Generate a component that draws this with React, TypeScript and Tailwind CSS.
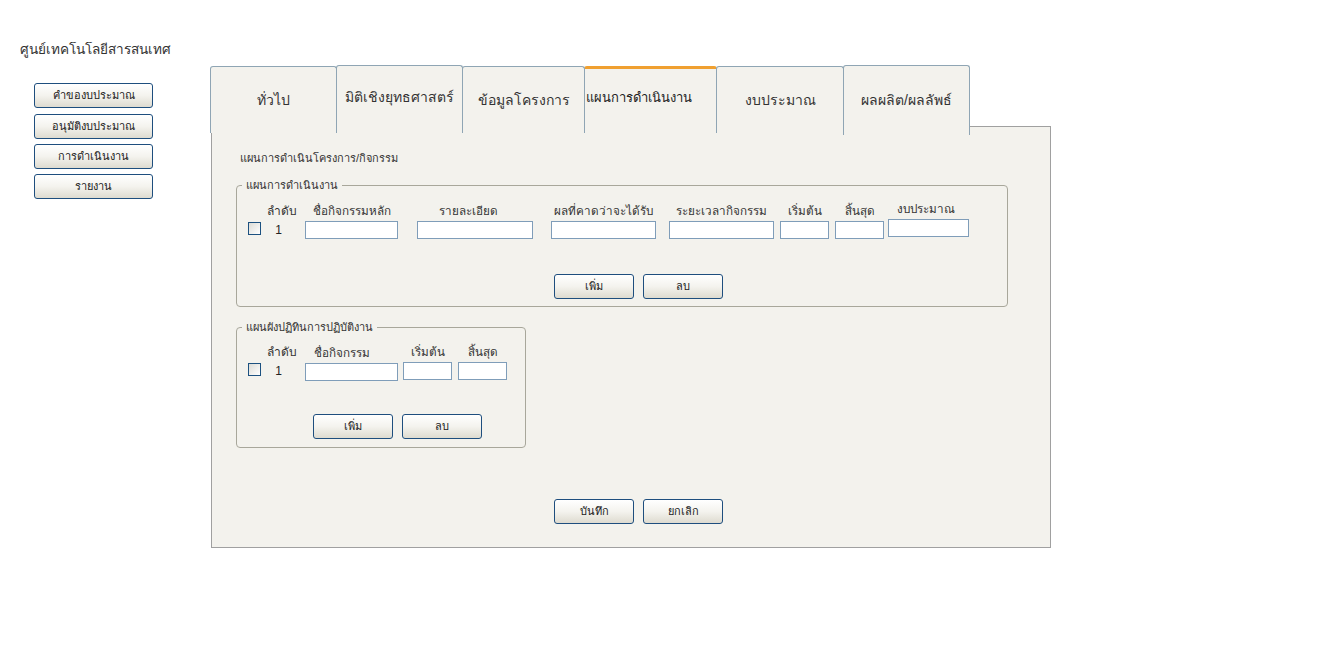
const FONT = "font-['Tahoma','Liberation_Sans','Noto_Sans',sans-serif]";

const SIDE_LINKS = [
  { label: "คำของบประมาณ", cls: "" },
  { label: "อนุมัติงบประมาณ", cls: "mt-[6px]" },
  { label: "การดำเนินงาน", cls: "mt-[5px]" },
  { label: "รายงาน", cls: "mt-[5px]" },
];

const TABS = [
  { label: "ทั่วไป", cls: "w-[127px] pt-[24px] text-center text-[14px]" },
  { label: "มิติเชิงยุทธศาสตร์", cls: "w-[127px] -ml-px pt-[22px] mt-[-1px] h-[68px] text-center text-[14px]" },
  { label: "ข้อมูลโครงการ", cls: "w-[123px] -ml-px pt-[24px] text-center text-[14px]" },
  { label: "แผนการดำเนินงาน", cls: "w-[133px] -ml-px pt-[20px] pr-[24px] text-center text-[13px] border-t-[3px] border-t-[#f0a030]", active: true },
  { label: "งบประมาณ", cls: "w-[128px] -ml-px pt-[24px] text-center text-[14px]" },
  { label: "ผลผลิต/ผลลัพธ์", cls: "w-[127px] -ml-px pt-[25px] mt-[-1px] h-[70px] text-center text-[14px]" },
];

// plan columns: header + input
const PLAN_COLS = [
  { head: "ชื่อกิจกรรมหลัก", cls: "w-[93px] ml-[8px]" },
  { head: "รายละเอียด", cls: "w-[116px] ml-[19px]", headCls: "pr-[14px]" },
  { head: "ผลที่คาดว่าจะได้รับ", cls: "w-[105px] ml-[18px]" },
  { head: "ระยะเวลากิจกรรม", cls: "w-[105px] ml-[13px]" },
  { head: "เริ่มต้น", cls: "w-[49px] ml-[6px]" },
  { head: "สิ้นสุด", cls: "w-[49px] ml-[6px]" },
  { head: "งบประมาณ", cls: "w-[81px] ml-[4px]", headCls: "-mt-[2px] pr-[5px]", inputCls: "-mt-px" },
];

const CAL_COLS = [
  { head: "ชื่อกิจกรรม", cls: "w-[93px] ml-[8px]", headCls: "self-start pl-[9px] mt-[1px]" },
  { head: "เริ่มต้น", cls: "w-[49px] ml-[5px]" },
  { head: "สิ้นสุด", cls: "w-[49px] ml-[6px]" },
];

function XpButton({ label, className = "" }: { label: string; className?: string }) {
  return (
    <button
      className={`h-[25px] w-[80px] rounded-[3px] border border-[#1e4e7e] bg-gradient-to-b from-[#ffffff] via-[#f4f3ee] to-[#dedbd0] text-[11px] text-[#222] ${className}`}
    >
      {label}
    </button>
  );
}

function Checkbox() {
  return <span className="block h-[13px] w-[13px] border border-[#1c5180] bg-gradient-to-br from-[#dcdcd6] to-[#ffffff]" />;
}

function TextBox({ className = "" }: { className?: string }) {
  return <div className={`h-[18px] w-full border border-[#7f9db9] bg-white ${className}`} />;
}

interface Col {
  head: string;
  cls: string;
  headCls?: string;
  inputCls?: string;
}

function GridRow({ cols }: { cols: Col[] }) {
  return (
    <div className="flex">
      {/* checkbox */}
      <div className="ml-[11px] flex flex-col">
        <div className="h-[16px]" />
        <div className="mt-[2px] h-[18px] pt-[1px]">
          <Checkbox />
        </div>
      </div>
      {/* order no. */}
      <div className="ml-[4px] flex w-[32px] flex-col items-center">
        <div className="h-[16px] pl-[2px] text-[12px] leading-[16px] text-[#333]">ลำดับ</div>
        <div className="mt-[2px] h-[18px] pr-[5px] text-[12px] leading-[18px] text-[#222]">1</div>
      </div>
      {cols.map((c) => (
        <div key={c.head} className={`flex flex-col items-center ${c.cls}`}>
          <div className={`h-[16px] whitespace-nowrap text-[11.7px] leading-[16px] text-[#333] ${c.headCls ?? ""}`}>
            {c.head}
          </div>
          <TextBox className={`mt-[2px] ${c.inputCls ?? ""}`} />
        </div>
      ))}
    </div>
  );
}

export default function App() {
  return (
    <div className={`min-h-[648px] w-[1318px] bg-white ${FONT}`}>
      <div className="pl-[20px] pt-[42px] text-[13.6px] leading-[16px] text-[#333]">ศูนย์เทคโนโลยีสารสนเทศ</div>

      <div className="mt-[8px] flex">
        {/* Sidebar */}
        <div className="flex w-[210px] flex-col pl-[34px] pt-[17px]">
          {SIDE_LINKS.map((l) => (
            <button
              key={l.label}
              className={`h-[25px] w-[119px] rounded-[3px] border border-[#1e4e7e] bg-gradient-to-b from-[#ffffff] via-[#f4f3ee] to-[#dedbd0] text-[11px] text-[#222] ${l.cls}`}
            >
              {l.label}
            </button>
          ))}
        </div>

        {/* Main */}
        <div className="flex flex-col">
          <div className="relative z-10 mb-[-7px] flex h-[67px] items-start">
            {TABS.map((t) => (
              <div
                key={t.label}
                className={`h-[67px] whitespace-nowrap rounded-t-[3px] border-x border-t border-[#8fa5b4] bg-[#f3f2ed] leading-[18px] ${
                  t.active ? "text-[#222]" : "text-[#333]"
                } ${t.cls}`}
              >
                {t.label}
              </div>
            ))}
          </div>

          <div className="ml-[1px] h-[422px] w-[840px] border border-[#a0a0a0] bg-[#f3f2ed] pt-[24px]">
            <div className="pl-[28px] text-[11px] leading-[14px] text-[#333]">แผนการดำเนินโครงการ/กิจกรรม</div>

            {/* Operation plan */}
            <fieldset className="ml-[24px] mt-[12px] w-[772px] rounded-[4px] border border-[#a8a79b] px-0 pb-[7px] pt-0">
              <legend className="ml-[5px] px-[4px] text-[11px] leading-[16px] text-[#333]">แผนการดำเนินงาน</legend>
              <div className="mt-[10px]">
                <GridRow cols={PLAN_COLS} />
              </div>
              <div className="ml-[317px] mt-[35px] flex gap-[9px]">
                <XpButton label="เพิ่ม" />
                <XpButton label="ลบ" />
              </div>
            </fieldset>

            {/* Calendar */}
            <fieldset className="ml-[24px] mt-[12px] w-[290px] rounded-[4px] border border-[#a8a79b] px-0 pb-[8px] pt-0">
              <legend className="ml-[5px] px-[4px] text-[11px] leading-[16px] text-[#333]">แผนผังปฏิทินการปฏิบัติงาน</legend>
              <div className="mt-[9px]">
                <GridRow cols={CAL_COLS} />
              </div>
              <div className="ml-[76px] mt-[33px] flex gap-[9px]">
                <XpButton label="เพิ่ม" />
                <XpButton label="ลบ" />
              </div>
            </fieldset>

            <div className="ml-[342px] mt-[51px] flex gap-[9px]">
              <XpButton label="บันทึก" />
              <XpButton label="ยกเลิก" />
            </div>
          </div>
        </div>
      </div>
    </div>
  );
}
